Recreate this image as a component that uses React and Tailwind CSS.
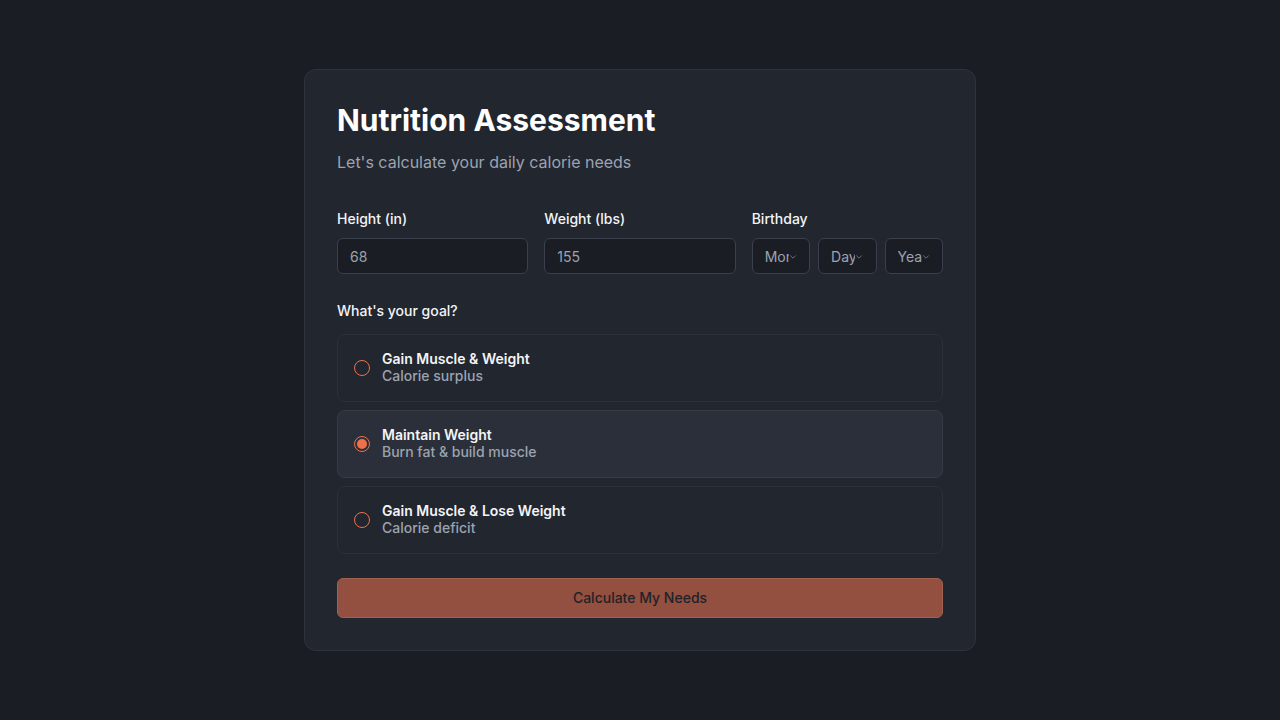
import { useState } from "react";

const goals = [
  { id: "gain", title: "Gain Muscle & Weight", sub: "Calorie surplus" },
  { id: "maintain", title: "Maintain Weight", sub: "Burn fat & build muscle" },
  { id: "recomp", title: "Gain Muscle & Lose Weight", sub: "Calorie deficit" },
];

function Chevron() {
  return (
    <svg width="8" height="8" viewBox="0 0 10 10" fill="none" className="shrink-0">
      <path d="M2 3.5 L5 6.5 L8 3.5" stroke="#6b7280" strokeWidth="1.2" strokeLinecap="round" strokeLinejoin="round" />
    </svg>
  );
}

function FakeSelect({ label }) {
  return (
    <div className="flex-1 h-[36px] flex items-center pl-[12px] pr-[8px] pt-[1px] rounded-md border border-[#3a3f4b] bg-[#1b1d24] overflow-hidden">
      <span className="w-[24px] overflow-hidden whitespace-nowrap text-sm text-[#9ca3af]">{label}</span>
      <Chevron />
    </div>
  );
}

export default function App() {
  const [goal, setGoal] = useState("maintain");

  return (
    <div
      className="min-h-[720px] bg-[#1b1d24] flex justify-center pt-[69px]"
      style={{ fontFamily: "Inter, 'Noto Sans', sans-serif" }}
    >
      <div className="w-[672px] h-[582px] rounded-xl border border-[#2f333d] bg-[#22262f] p-[32px]">
        <h1 className="text-[30px] leading-[36px] font-bold text-white">Nutrition Assessment</h1>
        <p className="mt-[12px] text-base text-[#9ca3af]">Let's calculate your daily calorie needs</p>

        <div className="mt-[35px] grid grid-cols-3 gap-4">
          <div>
            <label className="block text-sm font-medium text-[#f3f4f6]">Height (in)</label>
            <div className="mt-[9px] h-[36px] flex items-center px-[12px] pt-[1px] rounded-md border border-[#3a3f4b] bg-[#1b1d24] text-sm text-[#9ca3af]">68</div>
          </div>
          <div>
            <label className="block text-sm font-medium text-[#f3f4f6]">Weight (lbs)</label>
            <div className="mt-[9px] h-[36px] flex items-center px-[12px] pt-[1px] rounded-md border border-[#3a3f4b] bg-[#1b1d24] text-sm text-[#9ca3af]">155</div>
          </div>
          <div>
            <label className="block text-sm font-medium text-[#f3f4f6]">Birthday</label>
            <div className="mt-[9px] flex gap-2">
              <FakeSelect label="Month" />
              <FakeSelect label="Day" />
              <FakeSelect label="Year" />
            </div>
          </div>
        </div>

        <p className="mt-[27px] text-sm font-medium text-[#f3f4f6]">What's your goal?</p>

        <div className="mt-[13px] flex flex-col gap-2">
          {goals.map((g) => {
            const active = goal === g.id;
            return (
              <button
                key={g.id}
                onClick={() => setGoal(g.id)}
                className={
                  active
                    ? "h-[68px] flex items-center gap-[12px] px-[16px] rounded-lg border border-[#373b46] bg-[#2b2f39] text-left"
                    : "h-[68px] flex items-center gap-[12px] px-[16px] rounded-lg border border-[#2c3039] bg-[#22262f] text-left"
                }
              >
                <span className="w-[16px] h-[16px] rounded-full border border-[#f0704a] flex items-center justify-center">
                  {active && <span className="w-[10px] h-[10px] rounded-full bg-[#f0704a]" />}
                </span>
                <span className="flex flex-col pb-[3px]">
                  <span className="text-sm font-semibold text-[#f3f4f6] leading-[17px]">{g.title}</span>
                  <span className="text-sm font-medium text-[#9ca3af] leading-[17px]">{g.sub}</span>
                </span>
              </button>
            );
          })}
        </div>

        <button className="mt-[24px] w-full h-[40px] rounded-md border border-[#a3604f] bg-[#934f3f] text-sm font-medium text-[#1f2229]">
          Calculate My Needs
        </button>
      </div>
    </div>
  );
}
